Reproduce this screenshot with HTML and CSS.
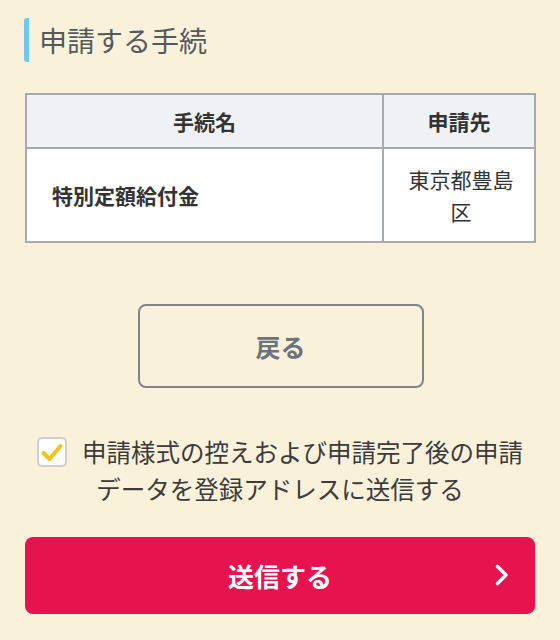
FILE: index.html
```html
<!DOCTYPE html>
<html lang="ja">
<head>
<meta charset="utf-8">
<link rel="stylesheet" href="styles.css">
</head>
<body>
<main class="page">
  <h2 class="heading">申請する手続</h2>
  <table class="proc-table">
    <thead>
      <tr><th class="col-name">手続名</th><th class="col-dest">申請先</th></tr>
    </thead>
    <tbody>
      <tr><td class="name">特別定額給付金</td><td class="dest">東京都豊島区</td></tr>
    </tbody>
  </table>
  <div class="back-wrap"><button class="back-btn">戻る</button></div>
  <p class="consent">
    <span class="checkbox"><svg viewBox="0 0 30 30" width="30" height="30"><path d="M6.5 16 L12.5 22 L23.5 9" fill="none" stroke="#f3c316" stroke-width="4" stroke-linecap="round" stroke-linejoin="round"/></svg></span><span class="consent-text">申請様式の控えおよび申請完了後の申請データを登録アドレスに送信する</span>
  </p>
  <button class="send-btn"><span>送信する</span><svg class="chev" viewBox="0 0 16 24" width="16" height="24"><path d="M3.5 3.5 L12 12 L3.5 20.5" fill="none" stroke="#fff" stroke-width="3.6" stroke-linecap="round" stroke-linejoin="round"/></svg></button>
</main>
</body>
</html>
```
FILE: styles.css
```css
html, body {
  margin: 0;
  padding: 0;
  background: #faf1da;
}
body {
  font-family: "Noto Sans CJK JP", "Noto Sans", sans-serif;
  color: #333;
}
.page {
  padding: 18px 25px 0 25px;
  width: 510px;
}
.heading {
  margin: 0;
  font-size: 28px;
  font-weight: 400;
  color: #555a5e;
  line-height: 44px;
  border-left: 5px solid #6fc6ef;
  border-radius: 3px;
  padding-left: 10px;
  margin-left: -1px;
}
.proc-table {
  margin-top: 31px;
  width: 511px;
  border-collapse: collapse;
  background: #fff;
  font-size: 21px;
}
.proc-table th, .proc-table td {
  border: 2px solid #a6a9ad;
}
.proc-table th {
  background: #eff1f5;
  height: 52px;
  font-weight: 700;
  color: #333;
  padding: 0;
}
.col-name { width: 355px; }
.proc-table td {
  height: 92px;
  padding: 0;
}
.name {
  font-weight: 700;
  padding-left: 25px !important;
  text-align: left;
}
.dest {
  text-align: center;
  line-height: 32px;
  padding: 0 14px 0 18px !important;
  color: #333;
}
.back-wrap {
  display: flex;
  justify-content: center;
  margin-top: 61px;
}
.back-btn {
  width: 286px;
  height: 84px;
  border: 2px solid #80848a;
  border-radius: 8px;
  background: transparent;
  font-family: inherit;
  font-size: 25px;
  font-weight: 700;
  color: #6b737c;
  margin-left: 1px;
}
.consent {
  margin: 45px 0 0 0;
  text-align: center;
  font-size: 24.5px;
  line-height: 37px;
  color: #3b3b3b;
}
.checkbox {
  display: inline-block;
  width: 26px;
  height: 26px;
  border: 2px solid #cfcfcf;
  border-radius: 5px;
  background: #fff;
  vertical-align: -5px;
  margin-right: 15px;
  position: relative;
}
.checkbox svg {
  position: absolute;
  left: -2px;
  top: -2px;
}
.send-btn {
  margin-top: 30px;
  width: 510px;
  height: 77px;
  border: none;
  border-radius: 8px;
  background: #e6134f;
  color: #fff;
  font-family: inherit;
  font-size: 26px;
  font-weight: 700;
  position: relative;
  display: flex;
  align-items: center;
  justify-content: center;
}
.chev {
  position: absolute;
  right: 25px;
  top: 26px;
}
```
